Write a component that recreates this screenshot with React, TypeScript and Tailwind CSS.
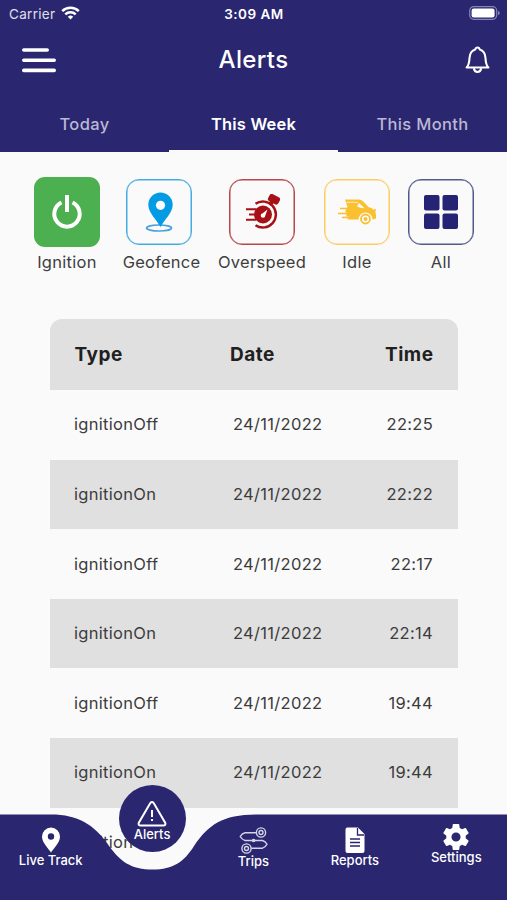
import type { ReactNode } from 'react'

const tabs = ['Today', 'This Week', 'This Month']

const rows = [
  { type: 'ignitionOff', date: '24/11/2022', time: '22:25' },
  { type: 'ignitionOn', date: '24/11/2022', time: '22:22' },
  { type: 'ignitionOff', date: '24/11/2022', time: '22:17' },
  { type: 'ignitionOn', date: '24/11/2022', time: '22:14' },
  { type: 'ignitionOff', date: '24/11/2022', time: '19:44' },
  { type: 'ignitionOn', date: '24/11/2022', time: '19:44' },
]

function StatusBar() {
  return (
    <div className="grid h-7 grid-cols-3 items-center px-[9px] text-[13.5px]">
      <div className="flex items-center gap-[6px] tracking-[0.3px] text-white/85">
        <span>Carrier</span>
        <svg className="mt-[-2px]" width="19" height="14" viewBox="0 0 19 14" fill="none" stroke="#fff" strokeWidth="2.5">
          <path d="M1.2 5.2a11.8 11.8 0 0 1 16.6 0" />
          <path d="M4.3 8.4a7.4 7.4 0 0 1 10.4 0" />
          <path d="M6.8 10.8a3.8 3.8 0 0 1 5.4 0L9.5 13.5z" fill="#fff" stroke="none" />
        </svg>
      </div>
      <span className="ml-px text-center font-semibold tracking-[0.5px]">3:09 AM</span>
      <svg className="mr-[-2px] mt-[-2px] justify-self-end" width="31" height="14" viewBox="0 0 31 14">
        <rect x="0.7" y="0.7" width="27" height="12.6" rx="4" fill="none" stroke="#8784b5" strokeWidth="1.2" />
        <rect x="2.6" y="2.5" width="23" height="9" rx="2.2" fill="#fff" />
        <path d="M29 4.7q1.8.7 1.8 2.3T29 9.3z" fill="#8784b5" />
      </svg>
    </div>
  )
}

function Header() {
  return (
    <header className="h-[152px] bg-[#2a266f] text-white">
      <StatusBar />
      <div className="grid h-[63px] grid-cols-3 items-center pl-[22px] pr-[17px]">
        <svg width="34" height="26" viewBox="0 0 34 26" stroke="#fff" strokeWidth="3.6" strokeLinecap="round">
          <path d="M1.8 3h23.4M1.8 13.2h30.4M1.8 23.4h30.4" />
        </svg>
        <h1 className="ml-[-5px] mt-px text-center text-[24px] font-medium tracking-[0.35px]">Alerts</h1>
        <svg className="justify-self-end" width="25" height="28" viewBox="0 0 25 28" fill="none" stroke="#fff" strokeWidth="2.1" strokeLinejoin="round">
          <path d="M1.6 21.5C4.2 19 4.3 16 4.5 12 4.8 7 7 4.2 10.3 3.4Q10.7 1.5 12.5 1.5t2.2 1.9c3.3.8 5.5 3.6 5.800 8.600.2 4 .3 7 2.900 9.500z" />
          <path d="M8.8 22.3q.7 3.700 3.700 3.700t3.700-3.700" />
        </svg>
      </div>
      <nav className="grid h-[61px] grid-cols-3">
        {tabs.map((tab) => (
          <button
            key={tab}
            className={
              tab === 'This Week'
                ? 'border-b-[2.5px] border-[#fafafa] pt-[8px] text-[16.5px] font-semibold tracking-[0.2px]'
                : 'border-b-[2.5px] border-transparent pt-[8px] text-[16.5px] font-medium tracking-[0.35px] text-[#bab8d3]'
            }
          >
            {tab}
          </button>
        ))}
      </nav>
    </header>
  )
}

function PowerIcon() {
  return (
    <svg width="32" height="36" viewBox="0 0 32 36" fill="none" stroke="#fff" strokeWidth="4">
      <path d="M10.5 8.5A12.7 12.7 0 1 0 21.5 8.5M16 1V18" />
    </svg>
  )
}

function GeofenceIcon() {
  return (
    <svg width="28" height="42" viewBox="0 0 28 42">
      <ellipse cx="14" cy="37" rx="12.5" ry="3" fill="none" stroke="#4aa0dc" strokeWidth="1.7" />
      <path d="M15.5 36C12 29 3.3 22 3.3 13.7a12.2 12.2 0 0 1 24.4 0C27.7 22 19 29 15.5 36z" fill="#049be5" />
      <circle cx="15.5" cy="14.3" r="4.6" fill="#fafafa" />
    </svg>
  )
}

function OverspeedIcon() {
  return (
    <svg width="36" height="36" viewBox="0 0 36 36" fill="none" stroke="#a71116">
      <path d="M11.5 9.8a13 13 0 1 1 0 21.4" strokeWidth="2.4" />
      <circle cx="19" cy="20.5" r="9" fill="#a71116" stroke="none" />
      <path d="M2 15.3h10M5 20.5h7M2 25.8h10" strokeWidth="1.9" />
      <path d="m26 11 2.5-4" strokeWidth="4" />
      <rect x="24.2" y="1.3" width="11.5" height="8" rx="2.5" transform="rotate(28 30 5.3)" fill="#a71116" stroke="none" />
      <path d="m23.5 15.5-2.2 6a2.3 2.3 0 1 1-2.6-2.3z" fill="#fff" stroke="none" />
    </svg>
  )
}

function IdleIcon() {
  return (
    <svg width="40" height="28" viewBox="0 0 40 28">
      <path
        d="M8 1.5h13.5q3 0 4.8 1.900L31.5 9q4 .9 5.2 3l1.3-1.2 1 .7-.7 2.5q1.2 2.5.7 6.5l-3.5 1a7 7 0 0 0-14 0H10.500l1-3H8.500l1.500-1.500-2-1 2-1.500-2-1 2.500-4.500z"
        fill="#fbc02f"
      />
      <path d="M9.5 4.500q8-.8 11.500.300" fill="none" stroke="#fafafa" strokeWidth="0.8" />
      <path d="m22 5 5.500 5.200q-4.500 0-7.500-1.700z" fill="#fafafa" />
      <path d="M3 10.5h8M1 15.5h9M5 19.5h6" stroke="#fbc02f" strokeWidth="1.3" />
      <circle cx="28.500" cy="21" r="4.500" fill="#fafafa" stroke="#fbc02f" strokeWidth="1.8" />
      <circle cx="28.500" cy="21" r="2" fill="#fbc02f" />
    </svg>
  )
}

function AllIcon() {
  return (
    <svg width="34" height="34" viewBox="0 0 34 34" fill="#252373">
      <rect width="15.5" height="15.5" rx="2" />
      <rect x="18.5" width="15.5" height="15.5" rx="2" />
      <rect y="18.5" width="15.5" height="15.5" rx="2" />
      <rect x="18.5" y="18.5" width="15.5" height="15.5" rx="2" />
    </svg>
  )
}

type FilterProps = {
  label: string
  box: string
  width: string
  children: ReactNode
}

function Filter({ label, box, width, children }: FilterProps) {
  return (
    <div className={`flex shrink-0 flex-col items-center ${width}`}>
      <div className={`flex w-[66px] items-center justify-center ${box}`}>{children}</div>
      <span
        className={
          label === 'Geofence'
            ? 'ml-[5px] mt-[3px] whitespace-nowrap text-[16.5px] leading-6 tracking-[0.2px] text-[#3e3e3e]'
            : 'mt-[3px] whitespace-nowrap text-[16.5px] leading-6 tracking-[0.3px] text-[#3e3e3e]'
        }
      >
        {label}
      </span>
    </div>
  )
}

function Filters() {
  return (
    <div className="flex h-[166.5px] items-start pl-[34px] pt-[25px]">
      <Filter label="Ignition" width="w-[66px]" box="h-[70px] rounded-[11px] bg-[#4caf50]">
        <PowerIcon />
      </Filter>
      <Filter label="Geofence" width="ml-[20px] w-[78px] pt-[2px]" box="mb-[2px] h-[66px] rounded-[13px] border border-[#43ade2] inset-shadow-[0_0_0_0.5px_#43ade2]">
        <GeofenceIcon />
      </Filter>
      <Filter label="Overspeed" width="ml-[20px] w-[88px] pt-[2px]" box="mb-[2px] h-[66px] rounded-[13px] border border-[#b7474c] inset-shadow-[0_0_0_0.5px_#b7474c]">
        <OverspeedIcon />
      </Filter>
      <Filter label="Idle" width="ml-[18px] w-[66px] pt-[2px]" box="mb-[2px] h-[66px] rounded-[13px] border border-[#fbce62] inset-shadow-[0_0_0_0.5px_#fbce62]">
        <IdleIcon />
      </Filter>
      <Filter label="All" width="ml-[18px] w-[66px] pt-[2px]" box="mb-[2px] h-[66px] rounded-[13px] border border-[#4f5b8d] inset-shadow-[0_0_0_0.5px_#4f5b8d]">
        <AllIcon />
      </Filter>
    </div>
  )
}

function AlertsTable() {
  return (
    <div className="mx-auto w-[408px] text-[#3c3c3c]">
      <div className="flex h-[71.5px] items-center rounded-t-[12px] bg-[#e0e0e0] px-[25px] pt-px text-[19px] font-bold tracking-[0.5px] text-[#202020]">
        <span className="w-[155.5px]">Type</span>
        <span>Date</span>
        <span className="ml-auto mr-[-1px]">Time</span>
      </div>
      {rows.map((row, i) => (
        <div
          key={i}
          className="flex h-[69.6px] items-center px-[24.5px] text-[16.5px] tracking-[0.3px] odd:bg-[#e0e0e0]"
        >
          <span className="w-[159px]">{row.type}</span>
          <span>{row.date}</span>
          <span className="ml-auto">{row.time}</span>
        </div>
      ))}
      <div className="flex h-[69.6px] items-center pl-[24.5px] text-[16.5px] tracking-[0.3px]">ignitionOff</div>
    </div>
  )
}

function TripsIcon() {
  return (
    <svg className="mb-[-1px]" width="29" height="27" viewBox="0 0 29 27" fill="none" stroke="#d5d4e8" strokeWidth="1.4">
      <circle cx="22" cy="5.5" r="4.6" />
      <circle cx="22" cy="5.5" r="2" />
      <circle cx="7.5" cy="21.5" r="4.6" />
      <circle cx="7.5" cy="21.5" r="2" />
      <path d="M17.4 5.7H6Q2.8 6.5 1.2 9.5 2.8 12.5 6 13.5H23.5q3 .8 4.5 3.8-1.5 3-4.5 3.9H12.1" />
      <circle cx="14.6" cy="13.5" r="1.1" fill="#d5d4e8" />
    </svg>
  )
}

function NavItem({ label, className, children }: { label: string; className: string; children: ReactNode }) {
  return (
    <button className={`flex flex-col items-center ${className}`}>
      {children}
      <span className="whitespace-nowrap text-[13px] font-medium leading-4">{label}</span>
    </button>
  )
}

function BottomNav() {
  return (
    <footer className="absolute inset-x-0 bottom-0 h-[115px] text-white">
      <svg className="absolute bottom-0 left-0" width="507" height="86" viewBox="0 0 507 86" fill="#2a266f">
        <path d="M0 .5H51C78 .5 94 11 107 29C120 48 131 55.5 153 55.5C173 55.5 184 48 194 32C209 10 223 .5 258 .5H507V86H0z" />
      </svg>
      <div className="relative grid h-full grid-cols-5">
        <NavItem label="Live Track" className="pt-[42px]">
          <svg className="mb-[-1px] ml-px" width="20" height="26" viewBox="0 0 20 26" fill="#fff">
            <path fillRule="evenodd" d="M10 .5a9 9 0 0 1 9 9C19 15.5 13 21 10 25.5 7 21 1 15.5 1 9.5a9 9 0 0 1 9-9zm0 5.800a3.200 3.200 0 1 0 0 6.400 3.200 3.200 0 0 0 0-6.400z" />
          </svg>
        </NavItem>
        <NavItem label="Alerts" className="h-[67px] w-[67px] justify-self-center rounded-full bg-[#2a266f] pt-[16px]">
          <svg className="mb-[-1px]" width="30" height="26" viewBox="0 0 30 26" fill="none" stroke="#fff" strokeWidth="2">
            <path d="M13.3 2.1q1.7-2 3.400 0L28.300 22q.7 2.500-2 2.500H3.700q-2.700 0-2-2.500z" />
            <path d="M15 9v7M15 18v2" />
          </svg>
        </NavItem>
        <NavItem label="Trips" className="pt-[42px]">
          <TripsIcon />
        </NavItem>
        <NavItem label="Reports" className="pt-[42px]">
          <svg className="mb-[-1px]" width="20" height="26" viewBox="0 0 20 26">
            <path d="M2 .5h11L19.5 7v17a2 2 0 0 1-2 2h-15a2 2 0 0 1-2-2V2.500a2 2 0 0 1 1.500-2z" fill="#fff" />
            <path d="M12.5 1v7h6.500M5 12h10M5 15.500h10M5 19h10" fill="none" stroke="#2a266f" strokeWidth="1.3" />
          </svg>
        </NavItem>
        <NavItem label="Settings" className="pt-[39px]">
          <svg className="mb-[-1px]" width="26" height="26" viewBox="2 2 20 20" fill="#fff">
            <path d="M19.430 12.980c.040-.320.070-.640.070-.980s-.030-.660-.070-.980l2.110-1.650a.5.5 0 0 0 .12-.64l-2-3.460a.5.5 0 0 0-.61-.22l-2.490 1a7.300 7.300 0 0 0-1.690-.98l-.38-2.650A.49.49 0 0 0 14 2h-4a.49.49 0 0 0-.49.420l-.38 2.650c-.61.250-1.170.590-1.690.980l-2.490-1a.49.49 0 0 0-.61.220l-2 3.460a.5.5 0 0 0 .12.640l2.110 1.650a8 8 0 0 0 0 1.960l-2.110 1.650a.5.5 0 0 0-.12.640l2 3.460c.12.220.39.300.61.220l2.490-1c.52.400 1.080.730 1.690.980l.38 2.650c.03.240.24.420.49.420h4c.25 0 .46-.18.490-.42l.38-2.650c.61-.25 1.170-.59 1.690-.98l2.490 1c.23.090.49 0 .61-.22l2-3.460a.5.5 0 0 0-.12-.64zM12 15.500a3.500 3.500 0 1 1 0-7 3.500 3.500 0 0 1 0 7z" />
          </svg>
        </NavItem>
      </div>
    </footer>
  )
}

export default function App() {
  return (
    <div className="relative h-[900px] w-[507px] overflow-hidden bg-[#fafafa] font-['Inter',sans-serif]">
      <Header />
      <Filters />
      <AlertsTable />
      <BottomNav />
    </div>
  )
}
